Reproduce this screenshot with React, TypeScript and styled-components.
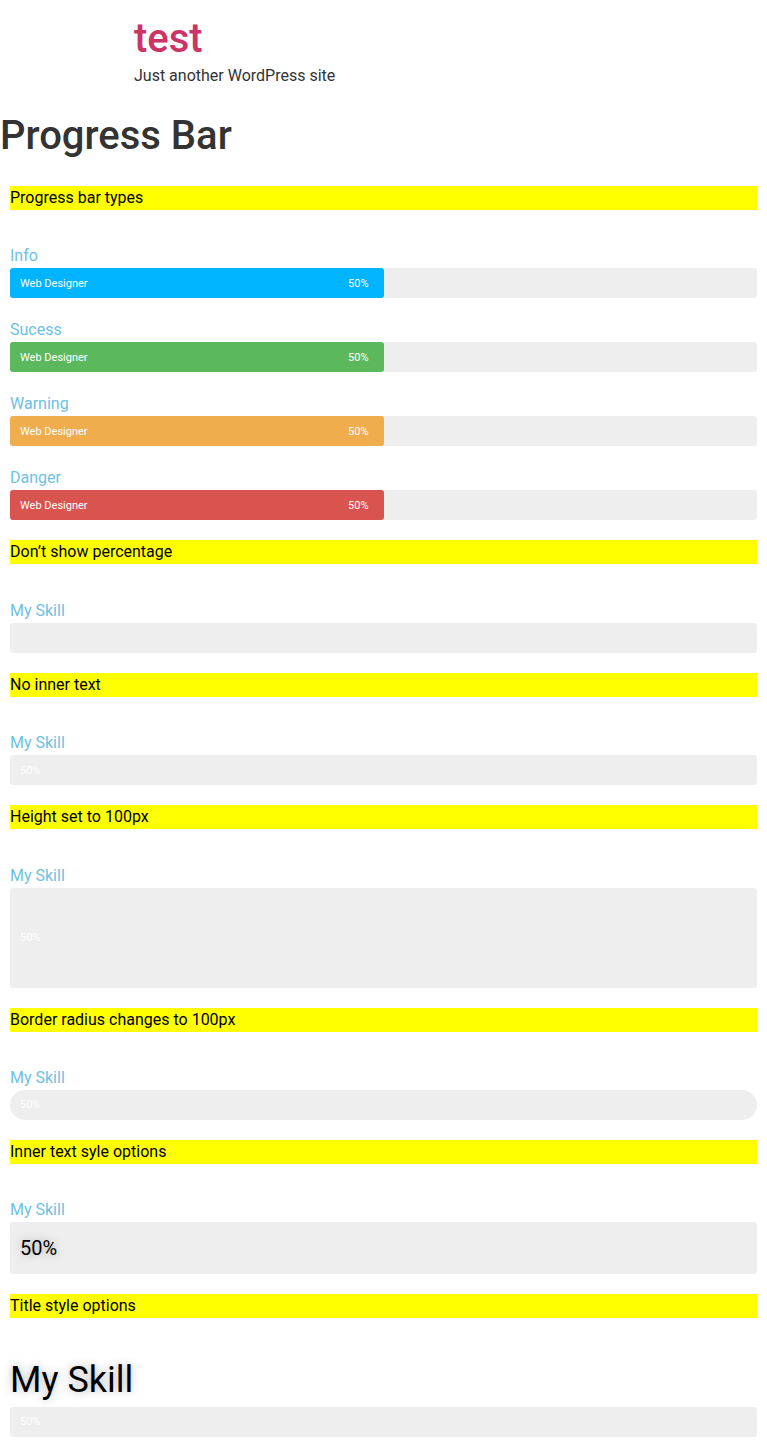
import React from 'react';
import styled, {createGlobalStyle} from 'styled-components';

interface ISkill {
    label: string
    percent: number
    fill?: string
    text?: string
    showPercent?: boolean
    height?: number
    radius?: number
    bigText?: boolean
    bigTitle?: boolean
}

interface ISection {
    heading: string
    skills: ISkill[]
}

const sections: ISection[] = [
    {
        heading: 'Progress bar types',
        skills: [
            {label: 'Info', percent: 50, fill: '#00b4ff', text: 'Web Designer'},
            {label: 'Sucess', percent: 50, fill: '#5cb85c', text: 'Web Designer'},
            {label: 'Warning', percent: 50, fill: '#f0ad4e', text: 'Web Designer'},
            {label: 'Danger', percent: 50, fill: '#d9534f', text: 'Web Designer'},
        ]
    },
    {heading: 'Don’t show percentage', skills: [{label: 'My Skill', percent: 0, showPercent: false}]},
    {heading: 'No inner text', skills: [{label: 'My Skill', percent: 0}]},
    {heading: 'Height set to 100px', skills: [{label: 'My Skill', percent: 0, height: 100}]},
    {heading: 'Border radius changes to 100px', skills: [{label: 'My Skill', percent: 0, radius: 100}]},
    {heading: 'Inner text syle options', skills: [{label: 'My Skill', percent: 0, height: 52, bigText: true}]},
    {heading: 'Title style options', skills: [{label: 'My Skill', percent: 0, bigTitle: true}]},
]

const SkillBar = ({skill}: { skill: ISkill }) => {
    const showPercent = skill.showPercent !== false
    return (
        <Item>
            <Label $big={!!skill.bigTitle}>{skill.label}</Label>
            <Track $height={skill.height ?? 30} $radius={skill.radius ?? 3}>
                <Fill $color={skill.fill ?? 'transparent'} style={{width: `${skill.percent}%`}}>
                    <InnerText>{skill.text}</InnerText>
                    {showPercent && <Percent $big={!!skill.bigText}>50%</Percent>}
                </Fill>
            </Track>
        </Item>
    )
}

export default function App() {
    return (
        <>
            <GlobalStyle/>
            <Header>
                <SiteTitle>test</SiteTitle>
                <Tagline>Just another WordPress site</Tagline>
            </Header>
            <PageTitle>Progress Bar</PageTitle>
            <Content>
                {sections.map(s => (
                    <Section key={s.heading}>
                        <SectionHeading>{s.heading}</SectionHeading>
                        {s.skills.map((sk, i) => <SkillBar key={i} skill={sk}/>)}
                    </Section>
                ))}
            </Content>
        </>
    )
}

const GlobalStyle = createGlobalStyle`
  body {
    margin: 0;
    font-family: Roboto, "Liberation Sans", sans-serif;
    color: #333;
    background: #fff;
  }
`
const Header = styled.header`
  padding: 15px 0 0 134px;
`
const SiteTitle = styled.h1`
  margin: 0;
  font-size: 40px;
  line-height: 48px;
  font-weight: 500;
  color: #c36;
`
const Tagline = styled.p`
  margin: 1px 0 0;
  font-size: 16px;
  line-height: 24px;
`
const PageTitle = styled.h1`
  margin: 24px 0 16px;
  font-size: 40px;
  line-height: 48px;
  font-weight: 500;
  color: #333;
`
const Content = styled.main`
  padding: 10px 10px 0;
`
const Section = styled.section`
  display: flex;
  flex-direction: column;
`
const SectionHeading = styled.div`
  background: #ffff00;
  color: #000;
  font-size: 16px;
  line-height: 24px;
  margin-bottom: 34.4px;
`
const Item = styled.div`
  margin-bottom: 20px;
`
const Label = styled.div<{ $big: boolean }>`
  font-size: ${p => p.$big ? '36px' : '16px'};
  line-height: ${p => p.$big ? '54px' : '24px'};
  color: ${p => p.$big ? '#000' : '#6ec1e4'};
  text-shadow: ${p => p.$big ? '0 0 10px rgba(0, 0, 0, 0.3)' : 'none'};
`
const Track = styled.div<{ $height: number, $radius: number }>`
  display: flex;
  height: ${p => p.$height}px;
  border-radius: ${p => p.$radius}px;
  background: #eee;
`
const Fill = styled.div<{ $color: string }>`
  display: flex;
  align-items: center;
  justify-content: space-between;
  height: 100%;
  border-radius: 3px;
  background: ${p => p.$color};
  color: #fff;
  font-size: 11px;
  white-space: nowrap;
`
const InnerText = styled.span`
  padding-left: 10px;
`
const Percent = styled.span<{ $big: boolean }>`
  padding-right: 15px;
  font-size: ${p => p.$big ? '20px' : '11px'};
  color: ${p => p.$big ? '#000' : '#fff'};
  text-shadow: ${p => p.$big ? '0 0 10px rgba(0, 0, 0, 0.3)' : 'none'};
`
